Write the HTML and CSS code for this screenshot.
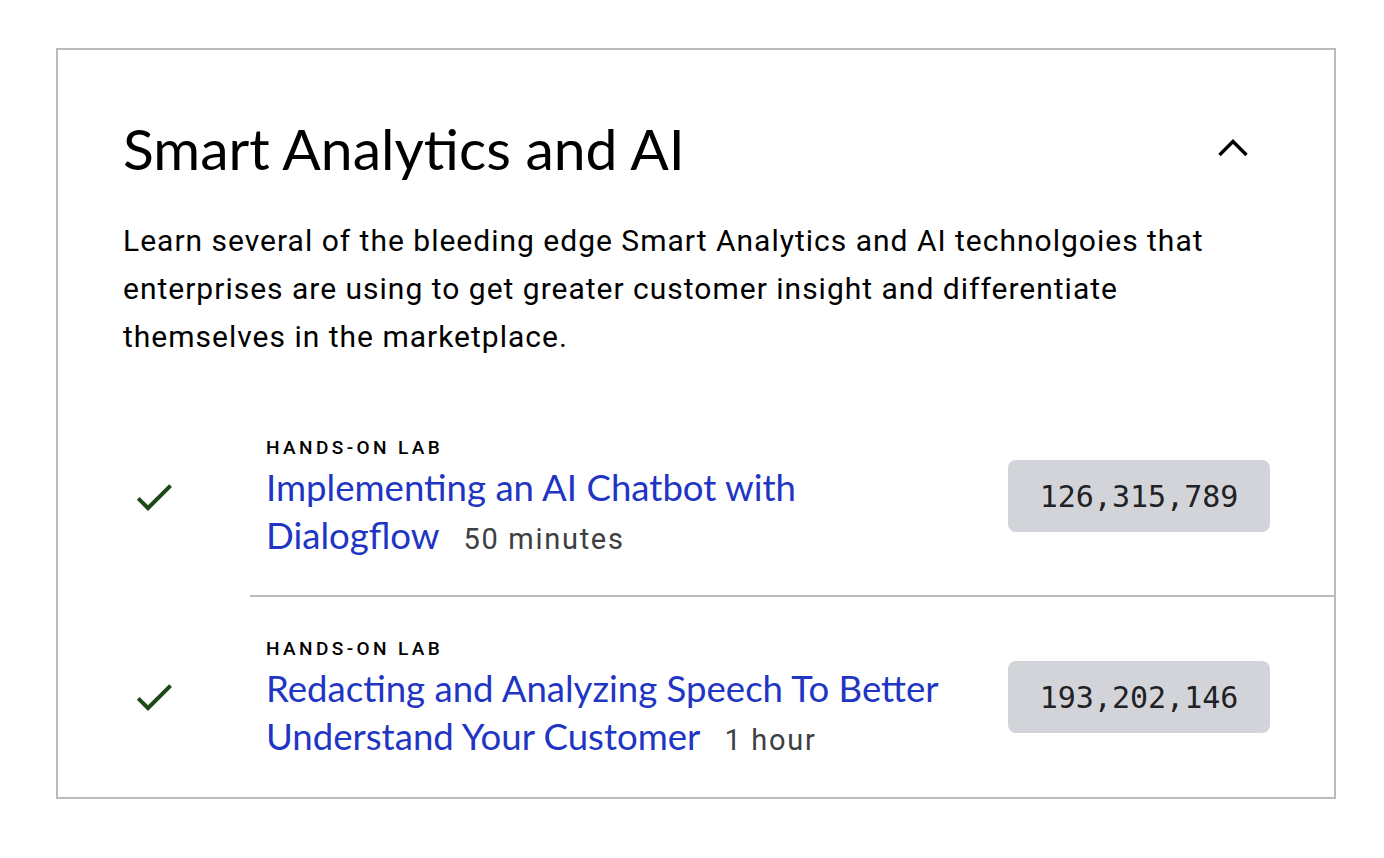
FILE: index.html
```html
<!DOCTYPE html>
<html lang="en">
<head>
<meta charset="utf-8">
<title>Smart Analytics and AI</title>
<link rel="stylesheet" href="styles.css">
</head>
<body>
<section class="card">
  <header class="card-head">
    <h2 class="card-title">Smart Analytics and AI</h2>
    <button class="toggle" aria-label="Collapse">
      <svg viewBox="0 0 48 48" width="48" height="48"><polyline points="10.5,31 24,17.5 37.5,31" fill="none" stroke="#000" stroke-width="3.4"/></svg>
    </button>
  </header>
  <p class="card-desc">Learn several of the bleeding edge Smart Analytics and AI technolgoies that enterprises are using to get greater customer insight and differentiate themselves in the marketplace.</p>
  <ul class="items">
    <li class="item">
      <div class="item-icon">
        <svg viewBox="0 0 24 24" width="48" height="48"><path fill="#1b4a1b" d="M9 16.17L4.83 12l-1.42 1.41L9 19 21 7l-1.41-1.41z"/></svg>
      </div>
      <div class="item-main">
        <div class="item-text">
          <div class="item-kind">HANDS-ON LAB</div>
          <div class="item-title"><a href="#" class="item-link">Implementing an AI Chatbot with Dialogflow</a><span class="item-dur">50 minutes</span></div>
        </div>
        <div class="badge">126,315,789</div>
      </div>
    </li>
    <li class="item">
      <div class="item-icon">
        <svg viewBox="0 0 24 24" width="48" height="48"><path fill="#1b4a1b" d="M9 16.17L4.83 12l-1.42 1.41L9 19 21 7l-1.41-1.41z"/></svg>
      </div>
      <div class="item-main">
        <div class="item-text">
          <div class="item-kind">HANDS-ON LAB</div>
          <div class="item-title"><a href="#" class="item-link">Redacting and Analyzing Speech To Better Understand Your Customer</a><span class="item-dur">1 hour</span></div>
        </div>
        <div class="badge">193,202,146</div>
      </div>
    </li>
  </ul>
</section>
</body>
</html>
```

FILE: styles.css
```css
html, body {
  margin: 0;
  padding: 0;
  background: #ffffff;
}
body {
  padding: 48px 48px 0 56px;
  font-family: Roboto, "Liberation Sans", sans-serif;
  color: #202124;
}
.card {
  width: 1280px;
  box-sizing: border-box;
  border: 2px solid #b9b9bf;
  padding: 62px 0 0 0;
}
.card-head {
  display: flex;
  align-items: center;
  justify-content: space-between;
  padding: 0 77px 0 65px;
}
.card-title {
  margin: 0;
  font-family: Lato, "Open Sans", sans-serif;
  font-weight: 400;
  font-size: 57px;
  line-height: 72px;
  color: #000;
}
.toggle {
  border: 0;
  background: none;
  padding: 0;
  width: 48px;
  height: 48px;
  display: flex;
}
.card-desc {
  margin: 33px 64px 0 65px;
  font-size: 30px;
  letter-spacing: 1px;
  line-height: 48px;
  color: #000;
}
.items {
  list-style: none;
  margin: 36px 0 0 0;
  padding: 0;
}
.item {
  display: flex;
}
.item-icon {
  width: 192px;
  display: flex;
  align-items: center;
  justify-content: center;
}
.item-main {
  flex: 1;
  display: flex;
  align-items: center;
  height: 200px;
  box-sizing: border-box;
  padding: 0 64px 0 16px;
  border-bottom: 2px solid #b9b9bf;
}
.item:last-child .item-main {
  border-bottom: 0;
}
.item-text {
  flex: 1;
  padding-right: 40px;
  padding-top: 7px;
}
.item-kind {
  font-size: 19px;
  font-weight: 500;
  letter-spacing: 3.4px;
  line-height: 24px;
  color: #000;
}
.item-title {
  font-family: Lato, "Open Sans", sans-serif;
  font-size: 36.6px;
  line-height: 48px;
  margin-top: 3px;
}
.item-link {
  color: #1f35c4;
  text-decoration: none;
  margin-right: 24px;
}
.item-dur {
  font-family: Roboto, "Liberation Sans", sans-serif;
  font-size: 29px;
  letter-spacing: 1.7px;
  color: #3c4043;
}
.badge {
  flex: none;
  width: 262px;
  height: 72px;
  box-sizing: border-box;
  border-radius: 8px;
  background: #d3d4d9;
  display: flex;
  align-items: center;
  justify-content: center;
  font-family: "DejaVu Sans Mono", "Liberation Mono", monospace;
  font-size: 30px;
  color: #202124;
}
```
